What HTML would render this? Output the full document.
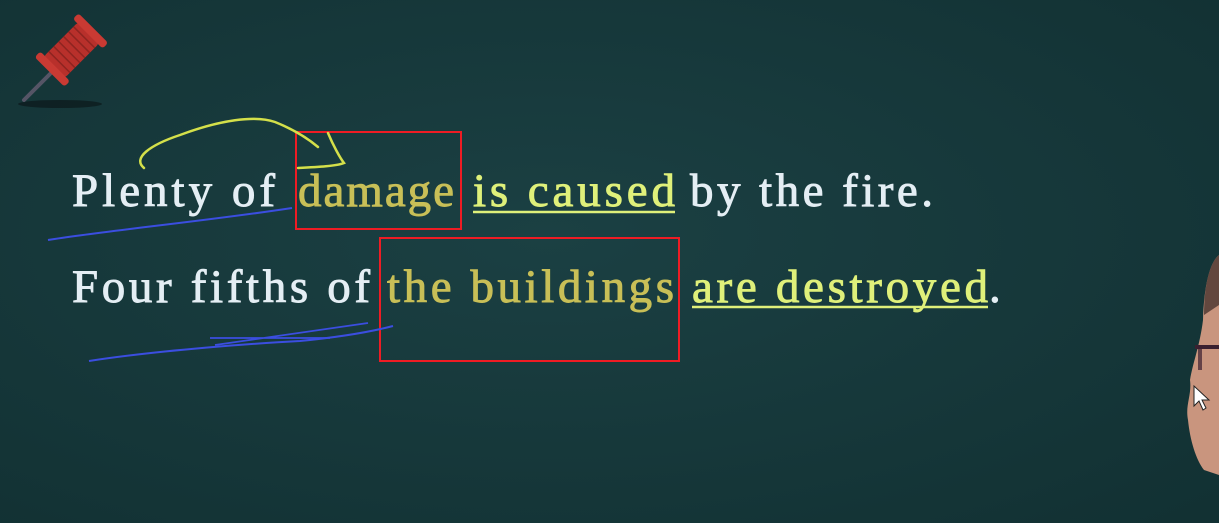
<!DOCTYPE html>
<html><head><meta charset="utf-8"><style>
html,body{margin:0;padding:0;}
body{width:1219px;height:523px;overflow:hidden;background:#173a3d;}
svg{display:block}
</style></head><body>
<svg width="1219" height="523" xmlns="http://www.w3.org/2000/svg">
<defs>
<radialGradient id="bg" cx="45%" cy="45%" r="75%">
<stop offset="0" stop-color="#1b4043"/><stop offset="1" stop-color="#123133"/>
</radialGradient>
</defs>
<rect width="1219" height="523" fill="url(#bg)"/>
<!-- pin -->
<ellipse cx="60" cy="104" rx="42" ry="4" fill="#0d1c1e" opacity="0.8"/>
<line x1="24" y1="100" x2="50" y2="74" stroke="#556" stroke-width="4" stroke-linecap="round"/>
<g transform="rotate(-45 70 50)">
<rect x="46" y="36" width="50" height="30" rx="4" fill="#b8302b"/>
<rect x="40" y="30" width="8" height="42" rx="3" fill="#c93a33"/>
<rect x="94" y="30" width="8" height="42" rx="3" fill="#c93a33"/>
<g stroke="#8e2420" stroke-width="1.5">
<line x1="54" y1="36" x2="54" y2="66"/><line x1="61" y1="36" x2="61" y2="66"/><line x1="68" y1="36" x2="68" y2="66"/><line x1="75" y1="36" x2="75" y2="66"/><line x1="82" y1="36" x2="82" y2="66"/><line x1="89" y1="36" x2="89" y2="66"/>
</g>
</g>
<g font-family="Liberation Serif, serif" font-size="47" stroke-width="0.9">
<text x="72" y="206" fill="#e4eef4" stroke="#e4eef4" textLength="203" lengthAdjust="spacing">Plenty of</text>
<text x="298" y="206" fill="#c8bf57" stroke="#c8bf57" textLength="156" lengthAdjust="spacing">damage</text>
<text x="473" y="206" fill="#dff07a" stroke="#dff07a" textLength="202" lengthAdjust="spacing">is caused</text>
<text x="690" y="206" fill="#e4eef4" stroke="#e4eef4" textLength="243" lengthAdjust="spacing">by the fire.</text>
<text x="72" y="302" fill="#e4eef4" stroke="#e4eef4" textLength="298" lengthAdjust="spacing">Four fifths of</text>
<text x="387" y="302" fill="#c8bf57" stroke="#c8bf57" textLength="287" lengthAdjust="spacing">the buildings</text>
<text x="692" y="302" fill="#dff07a" stroke="#dff07a" textLength="296" lengthAdjust="spacing">are destroyed</text>
<text x="989" y="302" fill="#e4eef4" stroke="#e4eef4">.</text>
</g>
<line x1="473" y1="212" x2="675" y2="212" stroke="#dff07a" stroke-width="2.5"/>
<line x1="692" y1="307" x2="988" y2="307" stroke="#dff07a" stroke-width="2.5"/>
<!-- red boxes -->
<rect x="296" y="132" width="165" height="97" fill="none" stroke="#ee1c24" stroke-width="2"/>
<rect x="380" y="238" width="299" height="123" fill="none" stroke="#ee1c24" stroke-width="2"/>
<!-- yellow arrow -->
<path d="M144 168 C132 158 150 145 180 135 C220 120 255 115 275 122 C290 128 305 136 318 147 M328 133 C333 145 340 158 344 163 C337 166 318 167 298 168" fill="none" stroke="#d4e04a" stroke-width="2.5" stroke-linecap="round"/>
<!-- blue lines -->
<path d="M48 240 C110 230 200 222 292 208" fill="none" stroke="#3b4ee0" stroke-width="2"/>
<path d="M89 361 C160 350 260 343 300 341 C340 337 370 332 393 326" fill="none" stroke="#3b4ee0" stroke-width="2"/>
<path d="M210 338 L330 338 M215 345 L368 323" fill="none" stroke="#3b4ee0" stroke-width="1.8"/>
<!-- person -->
<path d="M1219 255 C1210 262 1204 285 1203 320 C1200 345 1193 362 1190 380 C1192 395 1185 405 1188 420 C1190 440 1196 460 1204 470 L1219 475 Z" fill="#c9957e"/>
<path d="M1219 255 C1210 262 1204 285 1204 315 L1219 305 Z" fill="#4a332e" opacity="0.8"/>
<rect x="1195" y="345" width="24" height="4" fill="#3a2030"/>
<rect x="1198" y="345" width="4" height="25" fill="#3a2030" opacity="0.7"/>
<path d="M1194 386 L1194 406 L1199 401 L1203 410 L1206 408 L1202 400 L1209 400 Z" fill="#fff" stroke="#222" stroke-width="1"/>
</svg>
</body></html>
